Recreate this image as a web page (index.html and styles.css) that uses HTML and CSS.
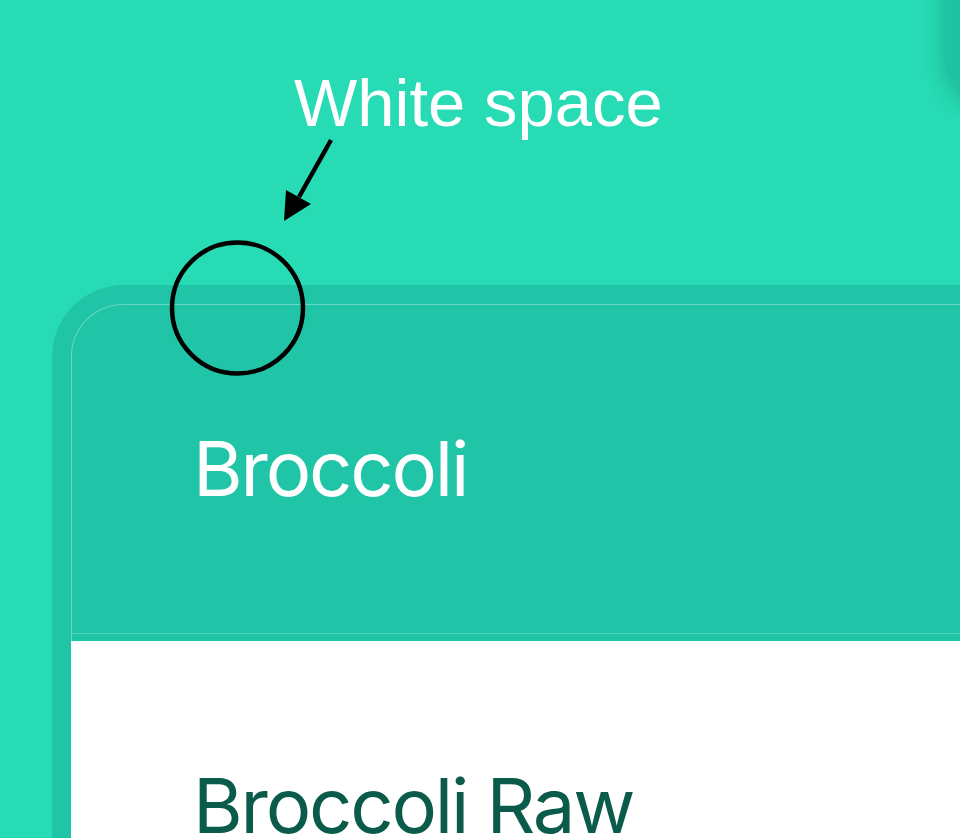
FILE: index.html
```html
<!DOCTYPE html>
<html lang="en">
<head>
<meta charset="utf-8">
<title>White space</title>
<link rel="stylesheet" href="styles.css">
</head>
<body>
  <div class="page">
    <div class="corner-card"></div>
    <div class="spacer"></div>
    <section class="panel">
      <div class="frame">
        <header class="panel-header">
          <h1 class="title">Broccoli</h1>
        </header>
        <div class="panel-body">
          <h2 class="item">Broccoli Raw</h2>
        </div>
      </div>
    </section>

    <div class="annotation-label">White space</div>
    <svg class="annotation" width="960" height="838" viewBox="0 0 960 838" aria-hidden="true">
      <line x1="331" y1="140" x2="299" y2="197" stroke="#000" stroke-width="4.5" stroke-linecap="butt"/>
      <polygon points="284,221 286,190 311,204" fill="#000"/>
      <circle cx="237.5" cy="308" r="65.5" fill="none" stroke="#000" stroke-width="4.5"/>
    </svg>
  </div>
</body>
</html>
```
FILE: styles.css
```css
* { box-sizing: border-box; }

html, body {
  margin: 0;
  padding: 0;
  width: 960px;
  height: 838px;
  overflow: hidden;
  background: #27dbb4;
}

.page {
  position: relative;
  width: 960px;
  height: 838px;
  overflow: hidden;
  display: flex;
  flex-direction: column;
}

.spacer {
  height: 285px;
  flex: none;
}

.corner-card {
  position: absolute;
  left: 945px;
  top: -100px;
  width: 120px;
  height: 204px;
  border-radius: 48px;
  background: #20c2a4;
  box-shadow: 0 4px 22px rgba(0, 60, 45, 0.28);
}

.panel {
  margin-left: 52px;
  flex: 1;
  background: #20c4a6;
  border-top-left-radius: 72px;
  padding: 19px 0 0 19px;
}

.frame {
  display: flex;
  flex-direction: column;
  height: 100%;
}

.panel-header {
  height: 337px;
  flex: none;
  border-top: 1px solid rgba(255, 255, 255, 0.32);
  border-left: 1px solid rgba(255, 255, 255, 0.32);
  border-top-left-radius: 52px;
  padding: 125px 0 0 121px;
  position: relative;
}

.panel-header::after {
  content: "";
  position: absolute;
  left: 0;
  right: 0;
  bottom: 7px;
  height: 1px;
  background: rgba(255, 255, 255, 0.22);
}

.title {
  margin: 0;
  font-family: Inter, "Noto Sans", sans-serif;
  font-weight: 400;
  font-size: 76px;
  line-height: 1;
  color: #ffffff;
  letter-spacing: -2.2px;
}

.panel-body {
  flex: 1;
  background: #ffffff;
  padding: 126px 0 0 122px;
}

.item {
  margin: 0;
  font-family: Inter, "Noto Sans", sans-serif;
  font-weight: 400;
  font-size: 76px;
  line-height: 1;
  color: #0b5b4b;
  letter-spacing: -2.2px;
  white-space: nowrap;
}

.annotation-label {
  position: absolute;
  left: 294px;
  top: 69px;
  font-family: "Liberation Sans", Arial, sans-serif;
  font-size: 67px;
  line-height: 1;
  color: #ffffff;
  white-space: nowrap;
}

.annotation {
  position: absolute;
  left: 0;
  top: 0;
  pointer-events: none;
}
```
